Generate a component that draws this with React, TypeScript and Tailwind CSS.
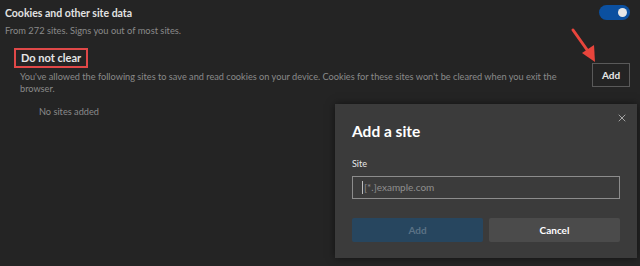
import { X } from "lucide-react";

function Toggle() {
  return (
    <div className="w-[31px] h-[15px] rounded-full bg-[#0b50a0] flex items-center justify-end pr-[3px]">
      <div className="w-[9px] h-[9px] rounded-full bg-[#e6e6e6]" />
    </div>
  );
}

function Arrow() {
  return (
    <svg className="absolute left-[568px] top-[26px]" width="32" height="38" viewBox="0 0 32 38">
      <line x1="5" y1="4" x2="22" y2="28" stroke="#e8453c" strokeWidth="3" strokeLinecap="round" />
      <polygon points="27,36 14,27 26,19" fill="#e8453c" />
    </svg>
  );
}

function AddSiteDialog() {
  return (
    <div className="absolute left-[335px] top-[104px] w-[302px] h-[154px] bg-[#3b3b3b] px-[17px] pt-[16px] shadow-[0_0_8px_rgba(0,0,0,0.5)]">
      <button className="absolute right-[9px] top-[8px] text-[#c8c8c8]">
        <X size={12} strokeWidth={1.5} />
      </button>
      <h2 className="text-[15.5px] leading-[22px] font-bold text-white">Add a site</h2>
      <label className="block mt-[16px] text-[9px] leading-[12px] text-[#e8e8e8]">Site</label>
      <div className="mt-[6px] h-[23px] border border-[#8c8c8c] flex items-center pl-[9px]">
        <span className="w-px h-[13px] bg-[#bdbdbd]" />
        <span className="text-[10px] text-[#8f8f8f] ml-px">[*.]example.com</span>
      </div>
      <div className="mt-[19px] flex gap-[6px]">
        <button className="w-[131px] h-[24px] rounded-[2px] bg-[#27465f] text-[10px] font-bold text-[#5b7285]">
          Add
        </button>
        <button className="w-[131px] h-[24px] rounded-[2px] bg-[#4b4b4b] text-[10px] font-bold text-white">
          Cancel
        </button>
      </div>
    </div>
  );
}

export default function App() {
  return (
    <div className="relative w-[640px] h-[266px] overflow-hidden bg-[#242424] font-['Lato',sans-serif]">
      <div className="flex justify-between pl-[5px] pr-[10px] pt-[5px]">
        <div>
          <div className="text-[10.5px] leading-[17px] font-bold text-[#e2e2e2]">
            Cookies and other site data
          </div>
          <div className="mt-[2px] text-[9.3px] leading-[14px] text-[#8a8a8a]">
            From 272 sites. Signs you out of most sites.
          </div>
        </div>
        <Toggle />
      </div>

      <div className="flex justify-between pl-[14px] pr-[10px] mt-[10px]">
        <div>
          <div className="flex items-center w-fit border-2 border-[#e04848] px-[5px] h-[20px]">
            <span className="text-[11px] leading-[16px] font-bold text-[#e6e6e6]">Do not clear</span>
          </div>
          <p className="pl-[6px] mt-[3px] w-[560px] text-[9.2px] leading-[12px] text-[#8a8a8a]">
            You've allowed the following sites to save and read cookies on your device. Cookies for these sites won't be
            cleared when you exit the browser.
          </p>
        </div>
        <button className="mt-[15px] w-[38px] h-[24px] border border-[#5a5a5a] text-[10px] font-bold text-[#e8e8e8]">
          Add
        </button>
      </div>

      <div className="pl-[39px] mt-[10px] text-[9.2px] leading-[14px] text-[#8a8a8a]">No sites added</div>

      <Arrow />
      <AddSiteDialog />
    </div>
  );
}
